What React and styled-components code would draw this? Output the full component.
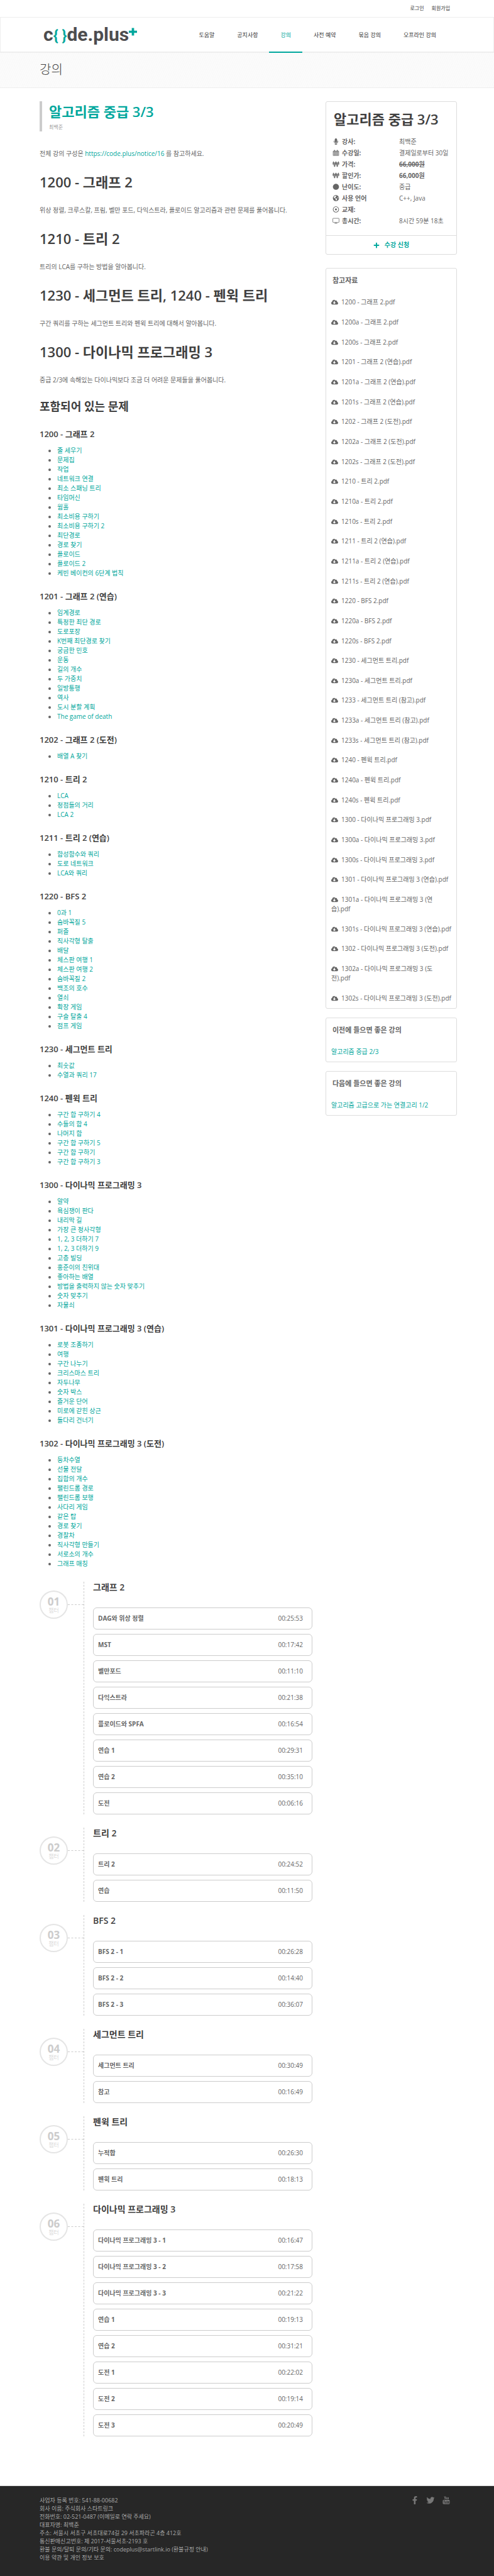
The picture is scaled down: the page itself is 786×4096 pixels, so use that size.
import React from 'react';
import styled, { createGlobalStyle } from 'styled-components';
import {
  FaMicrophone,
  FaWonSign,
  FaCircle,
  FaGlobeAmericas,
  FaRegDotCircle,
  FaCloudDownloadAlt,
  FaPlus,
  FaFacebookF,
  FaTwitter,
} from 'react-icons/fa';

const teal = '#00a79d';

const GlobalStyle = createGlobalStyle`
  *, *::before, *::after { box-sizing: border-box; }
  html { background: #fff; }
  body {
    margin: 0;
    font-family: "Open Sans", "Noto Sans CJK KR", sans-serif;
    font-size: 10px;
    line-height: 15px;
    color: #666;
  }
  h1, h2, h3, h4, p, ul, ol, dl, dd { margin: 0; padding: 0; }
  a { color: ${teal}; text-decoration: none; }
`;

const Page = styled.div`
  min-height: 100vh;
  display: flex;
  flex-direction: column;
`;

const TopBar = styled.div`
  display: flex;
  justify-content: flex-end;
  gap: 12px;
  height: 27px;
  padding: 0 70px 0 63px;
  line-height: 26px;
  font-size: 8px;
  a { color: #333; }
`;

const Header = styled.header`
  display: flex;
  justify-content: space-between;
  height: 57px;
  padding: 0 73px 0 68px;
  border: 1px solid #eee;
  border-bottom: 0;
  box-shadow: inset 0 -2px 0 #eee;
`;

const Logo = styled.a`
  display: flex;
  align-items: baseline;
  padding-top: 8px;
  font-family: Roboto, sans-serif;
  font-weight: 700;
  font-size: 30px;
  line-height: 38px;
  color: #4d4d4f;
`;

const Brace = styled.span`
  color: ${teal};
  font-size: 24px;
`;

const LogoPlus = styled.svg`
  align-self: flex-start;
  width: 13px;
  height: 13px;
  margin-top: 8px;
  fill: ${teal};
`;

const Nav = styled.nav`
  display: flex;
`;

const NavLink = styled.a`
  padding: 0 18px;
  line-height: 55px;
  font-size: 9px;
  color: ${(p) => (p.$active ? teal : '#333')};
  border-bottom: 2px solid ${(p) => (p.$active ? teal : 'transparent')};
`;

const Banner = styled.div`
  height: 56px;
  padding: 0 63px;
  border-bottom: 1px solid #eee;
  background: repeating-linear-gradient(115deg, #fbfbfb 0 2px, #f9f9f9 2px 3px);
`;

const BannerTitle = styled.h1`
  font-size: 20px;
  font-weight: 300;
  line-height: 54px;
  color: #444;
`;

const Columns = styled.div`
  display: grid;
  grid-template-columns: minmax(0, 1fr) 206px;
  gap: 21px;
  align-items: start;
  padding: 21px 62px 78px 63px;
`;

const Lead = styled.div`
  margin-bottom: 28px;
  padding: 4px 0 0 11px;
  height: 48px;
  border-left: 4px solid #ccc;
  h2 {
    font-size: 22px;
    line-height: 24px;
    font-weight: 600;
    color: ${teal};
  }
  p {
    margin-top: 5px;
    font-size: 8px;
    color: #999;
  }
`;

const Heading = styled.h2`
  margin: 22px 0 23px;
  font-size: 22px;
  line-height: 30px;
  font-weight: 600;
  color: #404040;
`;

const SubHeading = styled.h2`
  margin: 22px 0 23px;
  font-size: 18px;
  line-height: 24px;
  font-weight: 600;
  color: #404040;
`;

const ProblemGroup = styled.section`
  & + & { margin-top: 20px; }
  h3 {
    margin-bottom: 10px;
    font-size: 13px;
    line-height: 18px;
    font-weight: 600;
    color: #404040;
  }
  ul { padding-left: 28px; }
`;

const Chapters = styled.div`
  display: flex;
  flex-direction: column;
  gap: 21px;
  margin-top: 21px;
`;

const Chapter = styled.section`
  display: grid;
  grid-template-columns: 45px 25px minmax(0, 1fr);
`;

const ChapterBadge = styled.div`
  display: flex;
  flex-direction: column;
  align-items: center;
  width: 45px;
  height: 45px;
  margin-top: 14px;
  padding-top: 8px;
  border: 2px solid #e5e5e5;
  border-radius: 50%;
  color: #ccc;
  strong {
    font-size: 17px;
    line-height: 16px;
  }
  span {
    font-size: 9px;
    line-height: 11px;
    font-weight: 300;
  }
`;

const Connector = styled.div`
  height: 37px;
  border-bottom: 1px dashed #ccc;
`;

const ChapterBody = styled.div`
  padding-left: 14px;
  border-left: 1px dashed #ccc;
  h3 {
    height: 41px;
    font-size: 14px;
    line-height: 18px;
    font-weight: 600;
    color: #404040;
  }
  ol {
    display: grid;
    gap: 7px;
    list-style: none;
  }
`;

const Lecture = styled.li`
  display: flex;
  align-items: center;
  justify-content: space-between;
  height: 35px;
  padding: 0 14px 0 7px;
  border: 1px solid #ccc;
  border-radius: 6px;
`;

const Sidebar = styled.aside`
  display: grid;
  gap: 14px;
`;

const Card = styled.section`
  border: 1px solid #ddd;
  border-radius: 3px;
`;

const CourseCard = styled(Card)`
  margin-bottom: 7px;
`;

const CourseTitle = styled.h2`
  padding: 12px 12px 0;
  font-size: 22px;
  line-height: 30px;
  font-weight: 600;
  color: #404040;
`;

const Facts = styled.dl`
  display: grid;
  grid-template-columns: 106px minmax(0, 1fr);
  grid-auto-rows: 18px;
  line-height: 18px;
  padding: 12px 0 14px 10px;
  white-space: nowrap;
  dt {
    display: flex;
    align-items: center;
    gap: 4px;
    font-weight: 700;
  }
  dt svg { width: 11px; height: 10px; }
`;

const EnrollButton = styled.button`
  display: flex;
  align-items: center;
  justify-content: center;
  gap: 8px;
  width: 100%;
  height: 30px;
  padding: 0;
  border: 0;
  border-top: 1px solid #ddd;
  background: none;
  font: inherit;
  font-weight: 700;
  color: ${teal};
`;

const CardTitle = styled.h3`
  padding: 9px 10px 0;
  font-size: 11px;
  line-height: 20px;
  font-weight: 700;
`;

const FileGroups = styled.div`
  display: grid;
  gap: 16px;
  padding: 17px 8px 8px;
`;

const FileGroup = styled.ul`
  display: grid;
  gap: 17px;
  list-style: none;
  a {
    display: block;
    white-space: pre;
    color: #666;
  }
  svg {
    width: 11px;
    height: 9px;
    margin-right: 5px;
    vertical-align: -1px;
  }
`;

const RelatedLink = styled.a`
  display: block;
  padding: 17px 8px 8px;
`;

const Footer = styled.footer`
  flex: 1;
  display: flex;
  justify-content: space-between;
  align-items: flex-start;
  padding: 16px 69px 22px 63px;
  background: #272727;
  border-top: 1px solid #ddd;
  font-size: 9px;
  line-height: 13px;
  color: #aaa;
  a { color: #aaa; }
`;

const Social = styled.div`
  display: flex;
  gap: 11px;
  a { color: #777; line-height: 0; }
  svg { width: 14px; height: 13px; }
`;

const CalendarIcon = () => (
  <svg viewBox="0 0 14 14" fill="none" stroke="currentColor" strokeWidth="1" aria-hidden="true">
    <path d="M.8 3.2h12.4v10H.8zM.8 6h12.4M.8 8.4h12.4M.8 10.8h12.4M3.9 5.5v7.7M7 5.5v7.7M10.1 5.5v7.7" />
    <path d="M4 .6v3M10 .6v3" strokeWidth="2" />
    <path d="M1 3.9h12" strokeWidth="1.6" />
  </svg>
);

const MonitorIcon = () => (
  <svg viewBox="0 0 16 14" fill="none" stroke="currentColor" strokeWidth="1.1" aria-hidden="true">
    <rect x=".8" y="1.4" width="14.4" height="9.4" rx="1" />
    <path d="M8 11v1.8M4.6 13h6.8" />
  </svg>
);

const YouTubeIcon = () => (
  <svg viewBox="0 0 14 16" fill="none" stroke="currentColor" strokeWidth="1.2" aria-hidden="true">
    <path d="M3.2.4l1.3 3.2L5.8.4M4.5 3.6v2.8" />
    <rect x="6.5" y="2.5" width="1.5" height="3.4" rx=".7" />
    <path d="M9.6 2.3v3.6h1.7V2.3" />
    <path
      fill="currentColor"
      stroke="none"
      fillRule="evenodd"
      d="M2 7.4h10a1.8 1.8 0 0 1 1.8 1.8v4.6a1.8 1.8 0 0 1-1.8 1.8H2a1.8 1.8 0 0 1-1.8-1.8V9.200A1.8 1.8 0 0 1 2 7.400zM1.600 8.600v.9h1v4.500h.9V9.500h1v-.9zM5 10v4h2.200v-4h-.7v3.200h-.8V10zM8 8.600V14h2v-4H8.700V8.600zm.7 2.100h.6v2.600h-.6zM10.700 10v4h2v-1.200H12v.6h-.5v-1h1.200V10zm.8.7h.5v1h-.5z"
    />
  </svg>
);

const navItems = ['도움말', '공지사항', '강의', '사전 예약', '묶음 강의', '오프라인 강의'];

const topics = [
  ['1200 - 그래프 2', '위상 정렬, 크루스칼, 프림, 벨만 포드, 다익스트라, 플로이드 알고리즘과 관련 문제를 풀어봅니다.'],
  ['1210 - 트리 2', '트리의 LCA를 구하는 방법을 알아봅니다.'],
  ['1230 - 세그먼트 트리, 1240 - 펜윅 트리', '구간 쿼리를 구하는 세그먼트 트리와 펜윅 트리에 대해서 알아봅니다.'],
  ['1300 - 다이나믹 프로그래밍 3', '중급 2/3에 속해있는 다이나믹보다 조금 더 어려운 문제들을 풀어봅니다.'],
];

const problems = [
  ['1200 - 그래프 2', ['줄 세우기', '문제집', '작업', '네트워크 연결', '최소 스패닝 트리', '타임머신', '웜홀', '최소비용 구하기', '최소비용 구하기 2', '최단경로', '경로 찾기', '플로이드', '플로이드 2', '케빈 베이컨의 6단계 법칙']],
  ['1201 - 그래프 2 (연습)', ['임계경로', '특정한 최단 경로', '도로포장', 'K번째 최단경로 찾기', '궁금한 민호', '운동', '길의 개수', '두 가중치', '일방통행', '역사', '도시 분할 계획', 'The game of death']],
  ['1202 - 그래프 2 (도전)', ['배열 A 찾기']],
  ['1210 - 트리 2', ['LCA', '정점들의 거리', 'LCA 2']],
  ['1211 - 트리 2 (연습)', ['합성함수와 쿼리', '도로 네트워크', 'LCA와 쿼리']],
  ['1220 - BFS 2', ['0과 1', '숨바꼭질 5', '퍼즐', '직사각형 탈출', '배달', '체스판 여행 1', '체스판 여행 2', '숨바꼭질 2', '백조의 호수', '열쇠', '확장 게임', '구슬 탈출 4', '점프 게임']],
  ['1230 - 세그먼트 트리', ['최솟값', '수열과 쿼리 17']],
  ['1240 - 펜윅 트리', ['구간 합 구하기 4', '수들의 합 4', '나머지 합', '구간 합 구하기 5', '구간 합 구하기', '구간 합 구하기 3']],
  ['1300 - 다이나믹 프로그래밍 3', ['알약', '욕심쟁이 판다', '내리막 길', '가장 큰 정사각형', '1, 2, 3 더하기 7', '1, 2, 3 더하기 9', '고층 빌딩', '홍준이의 친위대', '좋아하는 배열', '방법을 출력하지 않는 숫자 맞추기', '숫자 맞추기', '자물쇠']],
  ['1301 - 다이나믹 프로그래밍 3 (연습)', ['로봇 조종하기', '여행', '구간 나누기', '크리스마스 트리', '자두나무', '숫자 박스', '즐거운 단어', '미로에 갇힌 상근', '돌다리 건너기']],
  ['1302 - 다이나믹 프로그래밍 3 (도전)', ['등차수열', '선물 전달', '집합의 개수', '팰린드롬 경로', '팰린드롬 보행', '사다리 게임', '같은 탑', '경로 찾기', '경찰차', '직사각형 만들기', '서로소의 개수', '그래프 매칭']],
];

const chapters = [
  ['그래프 2', [['DAG와 위상 정렬', '00:25:53'], ['MST', '00:17:42'], ['벨만포드', '00:11:10'], ['다익스트라', '00:21:38'], ['플로이드와 SPFA', '00:16:54'], ['연습 1', '00:29:31'], ['연습 2', '00:35:10'], ['도전', '00:06:16']]],
  ['트리 2', [['트리 2', '00:24:52'], ['연습', '00:11:50']]],
  ['BFS 2', [['BFS 2 - 1', '00:26:28'], ['BFS 2 - 2', '00:14:40'], ['BFS 2 - 3', '00:36:07']]],
  ['세그먼트 트리', [['세그먼트 트리', '00:30:49'], ['참고', '00:16:49']]],
  ['펜윅 트리', [['누적합', '00:26:30'], ['펜윅 트리', '00:18:13']]],
  ['다이나믹 프로그래밍 3', [['다이나믹 프로그래밍 3 - 1', '00:16:47'], ['다이나믹 프로그래밍 3 - 2', '00:17:58'], ['다이나믹 프로그래밍 3 - 3', '00:21:22'], ['연습 1', '00:19:13'], ['연습 2', '00:31:21'], ['도전 1', '00:22:02'], ['도전 2', '00:19:14'], ['도전 3', '00:20:49']]],
];

const facts = [
  [FaMicrophone, '강사:', '최백준'],
  [CalendarIcon, '수강일:', '결제일로부터 30일'],
  [FaWonSign, '가격:', <b><s>66,000원</s></b>],
  [FaWonSign, '할인가:', <b>66,000원</b>],
  [FaCircle, '난이도:', '중급'],
  [FaGlobeAmericas, '사용 언어', 'C++, Java'],
  [FaRegDotCircle, '교재:', ''],
  [MonitorIcon, '총시간:', '8시간 59분 18초'],
];

const fileGroups = [
  ['1200 - 그래프 2.pdf', '1200a - 그래프 2.pdf', '1200s - 그래프 2.pdf'],
  ['1201 - 그래프 2 (연습).pdf', '1201a - 그래프 2 (연습).pdf', '1201s - 그래프 2 (연습).pdf'],
  ['1202 - 그래프 2 (도전).pdf', '1202a - 그래프 2 (도전).pdf', '1202s - 그래프 2 (도전).pdf'],
  ['1210 - 트리 2.pdf', '1210a - 트리 2.pdf', '1210s - 트리 2.pdf'],
  ['1211 - 트리 2 (연습).pdf', '1211a - 트리 2 (연습).pdf', '1211s - 트리 2 (연습).pdf'],
  ['1220 - BFS 2.pdf', '1220a - BFS 2.pdf', '1220s - BFS 2.pdf'],
  ['1230 - 세그먼트 트리.pdf', '1230a - 세그먼트 트리.pdf'],
  ['1233 - 세그먼트 트리 (참고).pdf', '1233a - 세그먼트 트리 (참고).pdf', '1233s - 세그먼트 트리 (참고).pdf'],
  ['1240 - 펜윅 트리.pdf', '1240a - 펜윅 트리.pdf', '1240s - 펜윅 트리.pdf'],
  ['1300 - 다이나믹 프로그래밍 3.pdf', '1300a - 다이나믹 프로그래밍 3.pdf', '1300s - 다이나믹 프로그래밍 3.pdf'],
  ['1301 - 다이나믹 프로그래밍 3 (연습).pdf', '1301a - 다이나믹 프로그래밍 3 (연\n습).pdf', '1301s - 다이나믹 프로그래밍 3 (연습).pdf'],
  ['1302 - 다이나믹 프로그래밍 3 (도전).pdf', '1302a - 다이나믹 프로그래밍 3 (도\n전).pdf', '1302s - 다이나믹 프로그래밍 3 (도전).pdf'],
];

export default function App() {
  return (
    <Page>
      <GlobalStyle />
      <TopBar>
        <a href="#login">로그인</a>
        <a href="#join">회원가입</a>
      </TopBar>
      <Header>
        <Logo href="#home">
          <span>c</span>
          <Brace>{'{ }'}</Brace>
          <span>de.plus</span>
          <LogoPlus viewBox="0 0 14 13" aria-hidden="true">
            <path d="M5 0h4v4.500h5v4H9V13H5V8.500H0v-4h5z" />
          </LogoPlus>
        </Logo>
        <Nav>
          {navItems.map((item) => (
            <NavLink key={item} href="#nav" $active={item === '강의'}>{item}</NavLink>
          ))}
        </Nav>
      </Header>
      <Banner>
        <BannerTitle>강의</BannerTitle>
      </Banner>
      <Columns>
        <main>
          <Lead>
            <h2>알고리즘 중급 3/3</h2>
            <p>최백준</p>
          </Lead>
          <p>전체 강의 구성은 <a href="#notice">https://code.plus/notice/16</a> 를 참고하세요.</p>
          {topics.map(([title, text]) => (
            <React.Fragment key={title}>
              <Heading>{title}</Heading>
              <p>{text}</p>
            </React.Fragment>
          ))}
          <SubHeading>포함되어 있는 문제</SubHeading>
          {problems.map(([title, items]) => (
            <ProblemGroup key={title}>
              <h3>{title}</h3>
              <ul>
                {items.map((item) => (
                  <li key={item}><a href="#problem">{item}</a></li>
                ))}
              </ul>
            </ProblemGroup>
          ))}
          <Chapters>
            {chapters.map(([title, lectures], i) => (
              <Chapter key={title}>
                <ChapterBadge>
                  <strong>0{i + 1}</strong>
                  <span>챕터</span>
                </ChapterBadge>
                <Connector />
                <ChapterBody>
                  <h3>{title}</h3>
                  <ol>
                    {lectures.map(([name, time]) => (
                      <Lecture key={name}>
                        <b>{name}</b>
                        <span>{time}</span>
                      </Lecture>
                    ))}
                  </ol>
                </ChapterBody>
              </Chapter>
            ))}
          </Chapters>
        </main>
        <Sidebar>
          <CourseCard>
            <CourseTitle>알고리즘 중급 3/3</CourseTitle>
            <Facts>
              {facts.map(([Icon, label, value]) => (
                <React.Fragment key={label}>
                  <dt><Icon />{label}</dt>
                  <dd>{value}</dd>
                </React.Fragment>
              ))}
            </Facts>
            <EnrollButton type="button"><FaPlus />수강 신청</EnrollButton>
          </CourseCard>
          <Card>
            <CardTitle>참고자료</CardTitle>
            <FileGroups>
              {fileGroups.map((files) => (
                <FileGroup key={files[0]}>
                  {files.map((file) => (
                    <li key={file}><a href="#file"><FaCloudDownloadAlt />{file}</a></li>
                  ))}
                </FileGroup>
              ))}
            </FileGroups>
          </Card>
          <Card>
            <CardTitle>이전에 들으면 좋은 강의</CardTitle>
            <RelatedLink href="#prev">알고리즘 중급 2/3</RelatedLink>
          </Card>
          <Card>
            <CardTitle>다음에 들으면 좋은 강의</CardTitle>
            <RelatedLink href="#next">알고리즘 고급으로 가는 연결고리 1/2</RelatedLink>
          </Card>
        </Sidebar>
      </Columns>
      <Footer>
        <div>
          <p>사업자 등록 번호: 541-88-00682</p>
          <p>회사 이름: 주식회사 스타트링크</p>
          <p>전화번호: 02-521-0487 (이메일로 연락 주세요)</p>
          <p>대표자명: 최백준</p>
          <p>주소: 서울시 서초구 서초대로74길 29 서초파라곤 4층 412호</p>
          <p>통신판매신고번호: 제 2017-서울서초-2193 호</p>
          <p>환불 문의/탈퇴 문의/기타 문의: codeplus@startlink.io (<a href="#refund">환불규정 안내</a>)</p>
          <p><a href="#terms">이용 약관 및 개인 정보 보호</a></p>
        </div>
        <Social>
          <a href="#facebook" aria-label="Facebook"><FaFacebookF /></a>
          <a href="#twitter" aria-label="Twitter"><FaTwitter /></a>
          <a href="#youtube" aria-label="YouTube"><YouTubeIcon /></a>
        </Social>
      </Footer>
    </Page>
  );
}
